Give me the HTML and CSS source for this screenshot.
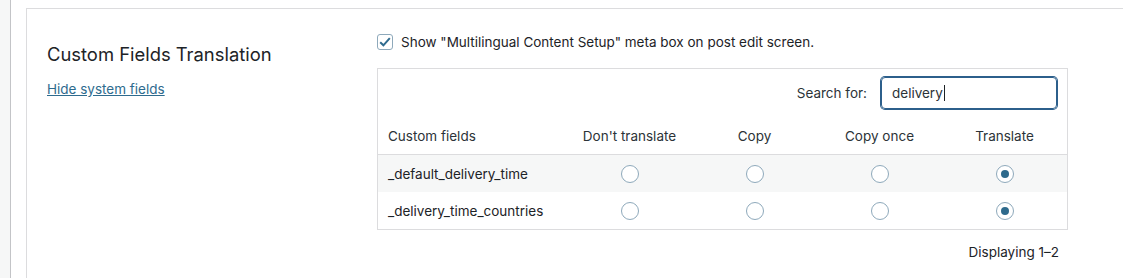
FILE: index.html
```html
<!DOCTYPE html>
<html lang="en">
<head>
    <title>Custom Fields Translation</title>
    <meta charset="UTF-8" />
    <meta name="viewport" content="width=device-width, initial-scale=1.0" />
    <link rel="stylesheet" href="styles.css">
</head>
<body>
    <div class="sidebar"></div>

    <div class="main">
        <div class="card">
            <div class="card-left">
                <h2 class="card-title">Custom Fields Translation</h2>
                <a class="link" href="#">Hide system fields</a>
            </div>

            <div class="card-right">
                <label class="check-row">
                    <span class="checkbox">
                        <svg width="14" height="14" viewBox="0 0 14 14">
                            <path d="M2.2 7.2 L5.4 10.3 L11.8 3.2" fill="none" stroke="#2f6b8f" stroke-width="2" />
                        </svg>
                    </span>
                    Show "Multilingual Content Setup" meta box on post edit screen.
                </label>

                <div class="fields-box">
                    <div class="search-row">
                        <span class="search-label">Search for:</span>
                        <div class="search-input">delivery<span class="caret"></span></div>
                    </div>

                    <table class="fields-table">
                        <thead>
                            <tr>
                                <th class="col-name">Custom fields</th>
                                <th>Don't translate</th>
                                <th>Copy</th>
                                <th>Copy once</th>
                                <th>Translate</th>
                            </tr>
                        </thead>
                        <tbody>
                            <tr class="alt">
                                <td class="col-name">_default_delivery_time</td>
                                <td><span class="radio"></span></td>
                                <td><span class="radio"></span></td>
                                <td><span class="radio"></span></td>
                                <td><span class="radio checked"></span></td>
                            </tr>
                            <tr>
                                <td class="col-name">_delivery_time_countries</td>
                                <td><span class="radio"></span></td>
                                <td><span class="radio"></span></td>
                                <td><span class="radio"></span></td>
                                <td><span class="radio checked"></span></td>
                            </tr>
                        </tbody>
                    </table>
                </div>

                <div class="pager">Displaying 1&ndash;2</div>
            </div>
        </div>
    </div>
</body>
</html>
```

FILE: styles.css
```css
body {
    font-family: Inter, 'Noto Sans', sans-serif;
    font-size: 13.5px;
    color: #1d2327;
    background: #fff;
    margin: 0;
    display: flex;
    height: 278px;
    overflow: hidden;
}

.sidebar {
    width: 10px;
    background: #f6f7f7;
    border-right: 1px solid #c3c4c7;
}

.main {
    flex: 1;
    padding: 8px 0 0 15px;
}

.card {
    display: flex;
    border-top: 1px solid #dcdcde;
    border-left: 1px solid #dcdcde;
    height: 100%;
    padding: 23px 0 0 20px;
    box-sizing: border-box;
}

.card-left {
    width: 330px;
    padding-top: 11px;
}

.card-title {
    font-size: 18.4px;
    font-weight: 400;
    line-height: 23px;
    margin: 0 0 13px 0;
    color: #1d2327;
}

.link {
    color: #2e6b8e;
    line-height: 20px;
}

.card-right {
    width: 691px;
}

.check-row {
    display: flex;
    align-items: center;
    gap: 8px;
    line-height: 20px;
    color: #1d2327;
}

.checkbox {
    width: 14px;
    height: 14px;
    border: 1px solid #8ea9bb;
    border-radius: 3px;
    display: flex;
    align-items: center;
    justify-content: center;
    background: #fff;
}

.fields-box {
    margin-top: 16px;
    border: 1px solid #dcdcde;
}

.search-row {
    display: flex;
    justify-content: flex-end;
    align-items: center;
    gap: 14px;
    padding: 8px 10px 9px 0;
}

.search-label {
    color: #2c3338;
}

.search-input {
    width: 159px;
    height: 30px;
    border: 1px solid #2c5f8b;
    box-shadow: 0 0 0 1px #2c5f8b;
    border-radius: 4px;
    padding: 0 5px 0 10px;
    display: flex;
    align-items: center;
    color: #2c3338;
}

.caret {
    width: 1px;
    height: 16px;
    background: #1d2327;
    margin-left: 1px;
}

.fields-table {
    width: 100%;
    border-collapse: collapse;
}

.fields-table th {
    font-weight: 400;
    color: #2c3338;
    height: 36px;
    padding: 0;
    text-align: center;
    border-bottom: 1px solid #dcdcde;
    vertical-align: middle;
    width: 125px;
}

.fields-table td {
    height: 37px;
    padding: 0;
    text-align: center;
    vertical-align: middle;
}

.fields-table .col-name {
    text-align: left;
    padding-left: 10px;
    width: auto;
}

.alt {
    background: #f6f7f7;
}

.radio {
    display: inline-block;
    width: 18px;
    height: 18px;
    border: 1px solid #8ea9bb;
    border-radius: 50%;
    background: #fff;
    box-sizing: border-box;
    vertical-align: middle;
    position: relative;
}

.radio.checked::after {
    content: "";
    position: absolute;
    top: 4px;
    left: 4px;
    width: 8px;
    height: 8px;
    border-radius: 50%;
    background: #2e6a8c;
}

.pager {
    text-align: right;
    padding: 12px 9px 0 0;
    line-height: 20px;
    color: #1d2327;
}
```
